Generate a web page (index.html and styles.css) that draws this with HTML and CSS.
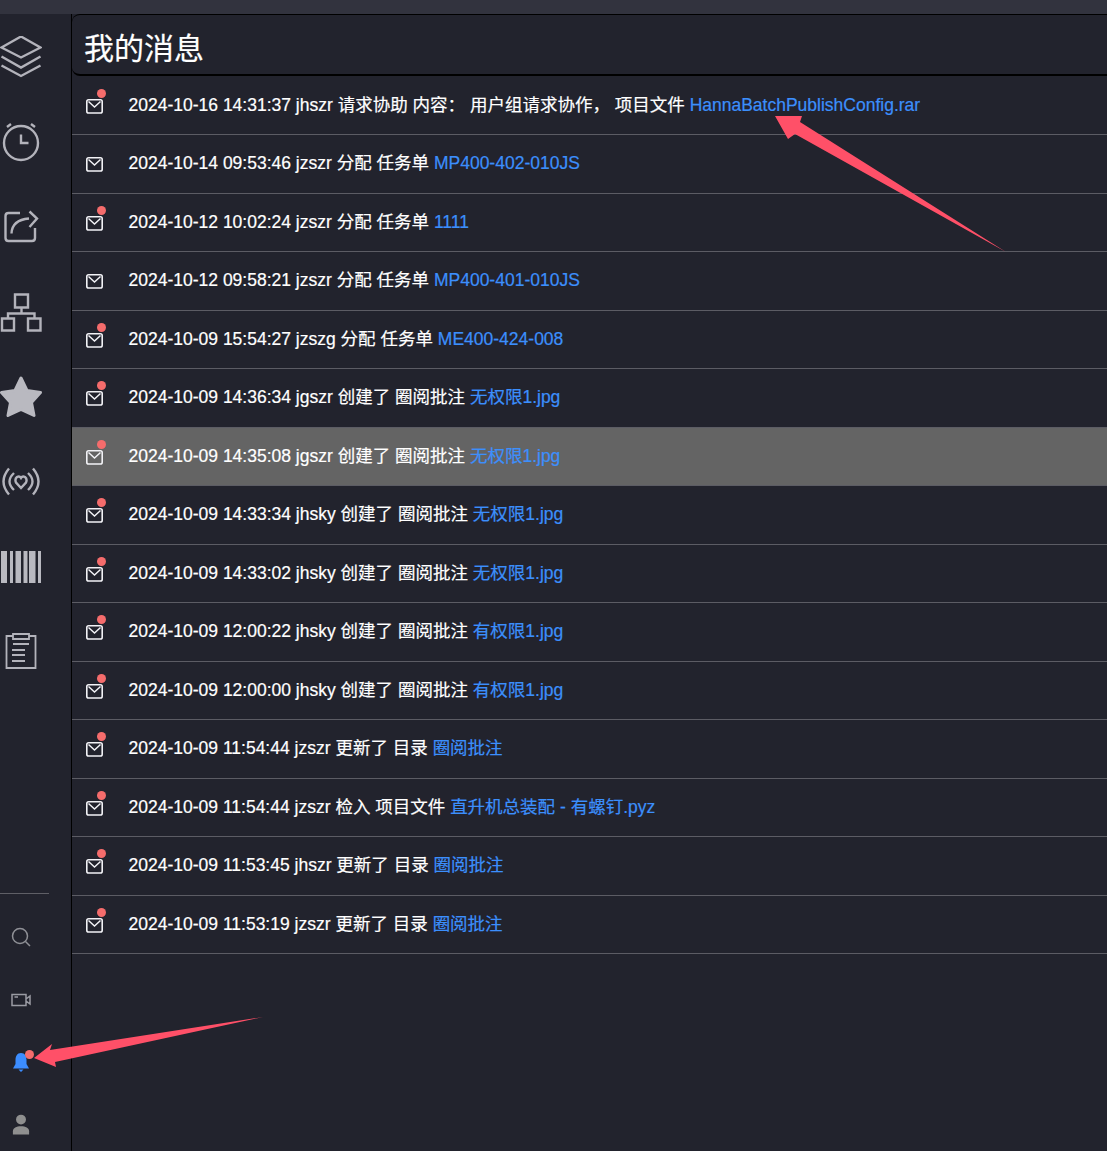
FILE: index.html
```html
<!DOCTYPE html>
<html lang="zh-CN">
    <head>
        <meta charset="UTF-8" />
        <meta name="viewport" content="width=device-width, initial-scale=1.0" />
        <title>我的消息</title>
        <link rel="stylesheet" href="styles.css">
    </head>
    <body>
        <svg class="defs" width="0" height="0">
            <symbol id="mail" viewBox="0 0 17 15">
                <rect x="0.8" y="0.8" width="15.4" height="13.2" rx="1.8" fill="none" stroke="currentColor" stroke-width="1.6" />
                <path d="M2.5 2.5 8.5 8 14.5 2.5" fill="none" stroke="currentColor" stroke-width="1.5" />
            </symbol>
        </svg>

        <div class="topbar"></div>
        <div class="app">
            <aside class="sidebar">
                <nav class="nav">
                    <a class="nav-item">
                        <svg class="nav-icon" viewBox="0 0 42 42"><path d="M21 0.5 40.5 11.5 21 21.5 1.5 11.5Z M1.5 20.5 21 31.5 40.5 20.5 M1.5 29.5 21 40 40.5 29.5" /></svg>
                    </a>
                    <a class="nav-item">
                        <svg class="nav-icon" viewBox="0 0 42 42"><circle cx="21" cy="22" r="17" /><path d="M21 13.5V22H28.5 M7 6 11 3 M35 6 31 3" /></svg>
                    </a>
                    <a class="nav-item">
                        <svg class="nav-icon" viewBox="0 0 42 42"><path d="M20 7H8.5Q5.5 7 5.5 10V32Q5.5 35 8.5 35H32Q35 35 35 32V22 M11.5 27.5Q12 14 29 12.5 M29.5 5.5 37 12.5 29.5 21" /></svg>
                    </a>
                    <a class="nav-item">
                        <svg class="nav-icon" viewBox="0 0 42 42"><path d="M15 3.5H28V16.5H15Z M2 27.5H14V39.5H2Z M28 27.5H40.5V39.5H28Z M21.5 16.5V22.5 M8 27.5V22.5H34.5V27.5" /></svg>
                    </a>
                    <a class="nav-item">
                        <svg class="nav-icon filled" viewBox="0 0 42 42"><path d="M21 2 27 14.5 40.5 16.5 31.5 26.5 34 39.5 21 33.5 8 39.5 10.5 26.5 1.5 16.5 15 14.5Z" /></svg>
                    </a>
                    <a class="nav-item">
                        <svg class="nav-icon" viewBox="0 0 42 42"><path d="M9 7.500Q-2 20.500 9 33.500 M33 7.500Q44 20.500 33 33.500 M14 12Q5 20.500 14 29 M28 12Q37 20.500 28 29 M21 27 16 21.500Q14.500 18 17 16 19.500 14.500 21 17 22.500 14.500 25 16 27.500 18 26 21.500Z" /></svg>
                    </a>
                    <a class="nav-item">
                        <svg class="nav-icon filled" viewBox="0 0 42 42">
                            <rect x="1" y="5" width="6" height="32" />
                            <rect x="10" y="5" width="3" height="32" />
                            <rect x="15.500" y="5" width="5.500" height="32" />
                            <rect x="23.500" y="5" width="4" height="32" />
                            <rect x="29" y="5" width="6.500" height="32" />
                            <rect x="38" y="5" width="3" height="32" />
                        </svg>
                    </a>
                    <a class="nav-item">
                        <svg class="nav-icon thin" viewBox="0 0 42 42"><path d="M13 5H6.500V37H35.500V5H29 M13 3H29V8H13Z M13 13H29 M12 19H25 M12 24H25 M12 30H25" /></svg>
                    </a>
                </nav>
                <div class="side-foot">
                    <div class="side-line"></div>
                    <a class="foot-item">
                        <svg class="foot-icon search" viewBox="0 0 24 24"><circle cx="11" cy="11" r="7.500" /><path d="M16.500 16.500 21 21" /></svg>
                    </a>
                    <a class="foot-item">
                        <svg class="foot-icon video" viewBox="0 0 24 24"><path d="M3 6.500H17V17.500H3Z M17 11 21 8V16L17 13 M5.500 9H9" /></svg>
                    </a>
                    <a class="foot-item">
                        <span class="bell-wrap">
                            <svg class="bell" viewBox="0 0 18 20"><path d="M9 1C5 1 3.500 4.500 3.500 8V12L1 16.500H17L14.500 12V8C14.500 4.500 13 1 9 1Z M6.500 17.500H11.500L9 20Z" /></svg>
                            <span class="dot bell-dot"></span>
                        </span>
                    </a>
                    <a class="foot-item">
                        <svg class="user" viewBox="0 0 20 24"><circle cx="10" cy="6" r="5.500" /><path d="M1 22.500V19C1 15.500 5 13.500 10 13.500S19 15.500 19 19V22.500Z" /></svg>
                    </a>
                </div>
            </aside>

            <main class="main">
                <h1 class="title">我的消息</h1>
                <ul class="msg-list">
                    <li class="msg">
                        <span class="msg-icon"><svg class="mail"><use href="#mail" /></svg><span class="dot"></span></span>
                        <span>2024-10-16 14:31:37 jhszr 请求协助 内容： 用户组请求协作， 项目文件 <a class="link">HannaBatchPublishConfig.rar</a></span>
                    </li>
                    <li class="msg">
                        <span class="msg-icon"><svg class="mail"><use href="#mail" /></svg></span>
                        <span>2024-10-14 09:53:46 jzszr 分配 任务单 <a class="link">MP400-402-010JS</a></span>
                    </li>
                    <li class="msg">
                        <span class="msg-icon"><svg class="mail"><use href="#mail" /></svg><span class="dot"></span></span>
                        <span>2024-10-12 10:02:24 jzszr 分配 任务单 <a class="link">1111</a></span>
                    </li>
                    <li class="msg">
                        <span class="msg-icon"><svg class="mail"><use href="#mail" /></svg></span>
                        <span>2024-10-12 09:58:21 jzszr 分配 任务单 <a class="link">MP400-401-010JS</a></span>
                    </li>
                    <li class="msg">
                        <span class="msg-icon"><svg class="mail"><use href="#mail" /></svg><span class="dot"></span></span>
                        <span>2024-10-09 15:54:27 jzszg 分配 任务单 <a class="link">ME400-424-008</a></span>
                    </li>
                    <li class="msg">
                        <span class="msg-icon"><svg class="mail"><use href="#mail" /></svg><span class="dot"></span></span>
                        <span>2024-10-09 14:36:34 jgszr 创建了 圈阅批注 <a class="link">无权限1.jpg</a></span>
                    </li>
                    <li class="msg active">
                        <span class="msg-icon"><svg class="mail"><use href="#mail" /></svg><span class="dot"></span></span>
                        <span>2024-10-09 14:35:08 jgszr 创建了 圈阅批注 <a class="link">无权限1.jpg</a></span>
                    </li>
                    <li class="msg">
                        <span class="msg-icon"><svg class="mail"><use href="#mail" /></svg><span class="dot"></span></span>
                        <span>2024-10-09 14:33:34 jhsky 创建了 圈阅批注 <a class="link">无权限1.jpg</a></span>
                    </li>
                    <li class="msg">
                        <span class="msg-icon"><svg class="mail"><use href="#mail" /></svg><span class="dot"></span></span>
                        <span>2024-10-09 14:33:02 jhsky 创建了 圈阅批注 <a class="link">无权限1.jpg</a></span>
                    </li>
                    <li class="msg">
                        <span class="msg-icon"><svg class="mail"><use href="#mail" /></svg><span class="dot"></span></span>
                        <span>2024-10-09 12:00:22 jhsky 创建了 圈阅批注 <a class="link">有权限1.jpg</a></span>
                    </li>
                    <li class="msg">
                        <span class="msg-icon"><svg class="mail"><use href="#mail" /></svg><span class="dot"></span></span>
                        <span>2024-10-09 12:00:00 jhsky 创建了 圈阅批注 <a class="link">有权限1.jpg</a></span>
                    </li>
                    <li class="msg">
                        <span class="msg-icon"><svg class="mail"><use href="#mail" /></svg><span class="dot"></span></span>
                        <span>2024-10-09 11:54:44 jzszr 更新了 目录 <a class="link">圈阅批注</a></span>
                    </li>
                    <li class="msg">
                        <span class="msg-icon"><svg class="mail"><use href="#mail" /></svg><span class="dot"></span></span>
                        <span>2024-10-09 11:54:44 jzszr 检入 项目文件 <a class="link">直升机总装配 - 有螺钉.pyz</a></span>
                    </li>
                    <li class="msg">
                        <span class="msg-icon"><svg class="mail"><use href="#mail" /></svg><span class="dot"></span></span>
                        <span>2024-10-09 11:53:45 jhszr 更新了 目录 <a class="link">圈阅批注</a></span>
                    </li>
                    <li class="msg">
                        <span class="msg-icon"><svg class="mail"><use href="#mail" /></svg><span class="dot"></span></span>
                        <span>2024-10-09 11:53:19 jzszr 更新了 目录 <a class="link">圈阅批注</a></span>
                    </li>
                </ul>
            </main>
        </div>

        <!-- red arrows drawn over the screenshot -->
        <svg class="marks" viewBox="0 0 1107 1151">
            <polygon points="775,116 802,116 800,122 1006,252 795,134 788,139" />
            <polygon points="34,1058 52,1044 50,1050 263,1017 55,1062 56,1067" />
        </svg>
    </body>
</html>
```

FILE: styles.css
```css
* {
    box-sizing: border-box;
}
html,
body {
    height: 100%;
}
body {
    margin: 0;
    background-color: #22232d;
    color: #fff;
    font-family: "Liberation Sans", "Noto Sans CJK SC", sans-serif;
    font-size: 17.5px;
    -webkit-text-stroke: 0.2px;
    overflow: hidden;
}
.defs {
    position: absolute;
}
.topbar {
    height: 14px;
    background-color: #32333e;
}
.app {
    display: flex;
    height: calc(100% - 14px);
}
.sidebar {
    flex: 0 0 72px;
    display: flex;
    flex-direction: column;
    border-right: 1px solid #000;
}
.nav-item {
    display: block;
    height: 85px;
    padding-top: 21.5px;
}
.nav-icon {
    display: block;
    width: 42px;
    height: 42px;
    fill: none;
    stroke: #b3b3bb;
    stroke-width: 2.4;
}
.nav-icon.filled {
    fill: #b9b9c0;
    stroke: none;
}
.nav-icon.filled path {
    stroke: #b9b9c0;
    stroke-width: 3;
    stroke-linejoin: round;
}
.nav-icon.thin {
    stroke-width: 1.8;
}
.side-foot {
    margin-top: auto;
    margin-bottom: -4px;
}
.side-line {
    width: 49px;
    height: 1px;
    margin-bottom: 13px;
    background-color: #5f5f66;
}
.foot-item {
    display: flex;
    align-items: center;
    justify-content: center;
    width: 42px;
    height: 62px;
}
.foot-icon {
    width: 24px;
    height: 24px;
    fill: none;
    stroke: #8f9096;
    stroke-width: 1.5;
}
.foot-icon.search {
    margin-bottom: 3px;
}
.foot-icon.video {
    stroke: #9a9ba3;
}
.bell-wrap {
    position: relative;
    display: block;
    width: 18px;
    height: 20px;
}
.bell {
    display: block;
    width: 18px;
    height: 20px;
    fill: #3c8dff;
}
.user {
    width: 18px;
    height: 22px;
    margin-top: 2px;
    fill: #8f8f8f;
}
.main {
    flex: 1;
    min-width: 0;
}
.title {
    height: 62px;
    margin: 0;
    padding-left: 12px;
    border-top: 1px solid #000;
    border-bottom: 2px solid #000;
    border-radius: 8px 0 0 8px;
    font-size: 30px;
    font-weight: 400;
    line-height: 67px;
}
.msg-list {
    margin: 0;
    padding: 0.5px 0 0;
    list-style: none;
}
.msg {
    display: flex;
    align-items: center;
    height: 58.5px;
    padding: 0 0 4px 14px;
    border-bottom: 1px solid #5c5c64;
    white-space: pre;
}
.msg.active {
    background-color: #646464;
}
.msg-icon {
    position: relative;
    display: block;
    width: 17px;
    height: 15px;
    margin: 6px 25.5px 0 0;
}
.mail {
    display: block;
    width: 17px;
    height: 15px;
    color: #f2f2f6;
}
.dot {
    position: absolute;
    top: -10px;
    left: 11px;
    width: 9px;
    height: 9px;
    border-radius: 50%;
    background-color: #f56c6c;
}
.dot.bell-dot {
    top: -2px;
    left: 12.5px;
}
.link {
    color: #3c8ffc;
}
.marks {
    position: absolute;
    top: 0;
    left: 0;
    width: 1107px;
    height: 1151px;
    fill: #ff5068;
    pointer-events: none;
}
```
